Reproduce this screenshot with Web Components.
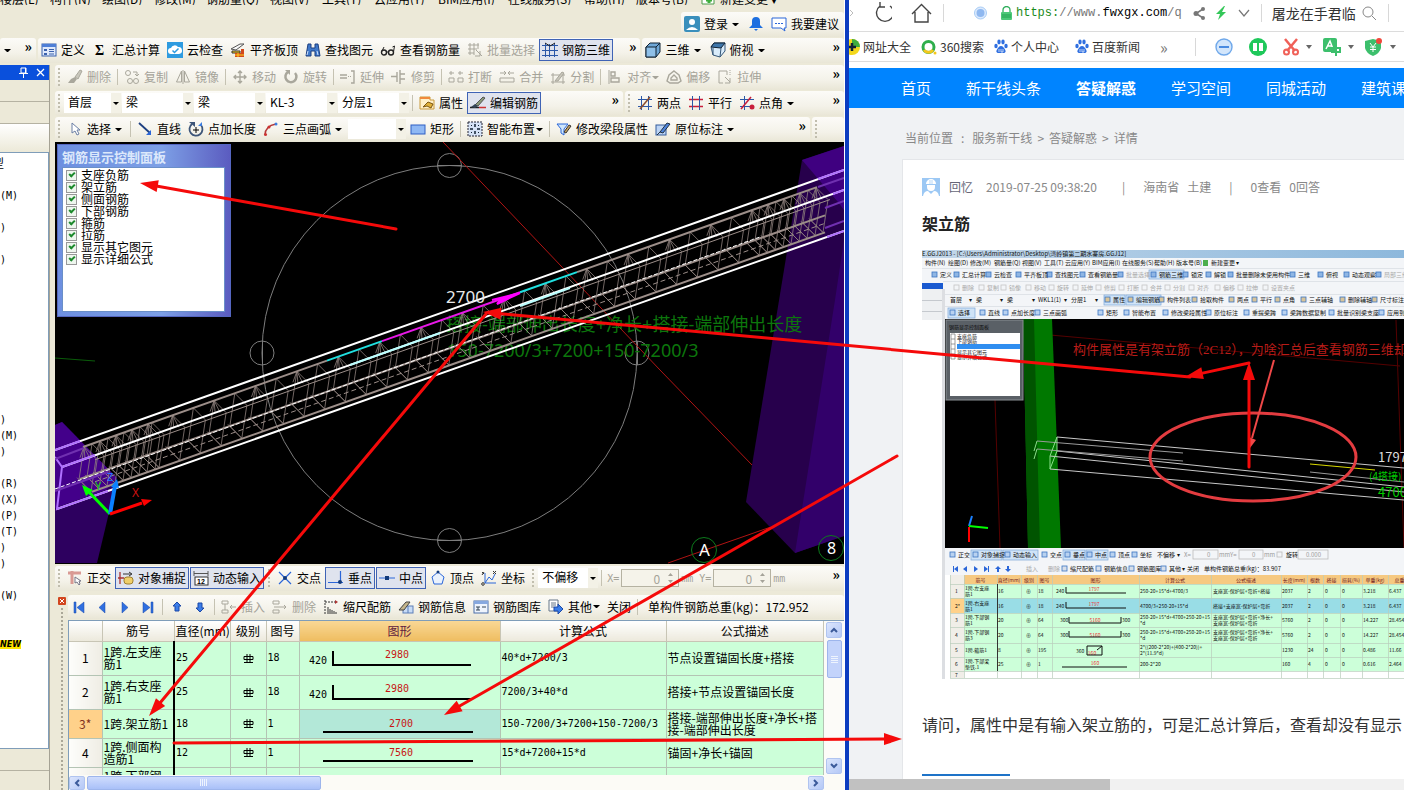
<!DOCTYPE html>
<html lang="zh-CN">
<head>
<meta charset="UTF-8">
<title>架立筋 - 答疑解惑</title>
<style>
  html, body { height: 100%; }
  body {
    margin: 0;
    display: grid;
    grid-template-columns: 849fr 555fr;
    overflow: hidden;
    font-family: "Noto Sans CJK SC", sans-serif;
    font-size: 12px;
    line-height: 16px;
    color: #000;
  }
</style>
</head>
<body>
<cad-app></cad-app>
<browser-app></browser-app>
<mark-layer></mark-layer>

<script>
const G = '#a9a79c';
const B = '#2b57a8';

// 16x16 图标
const ICONS = {
  define: `<rect x="1" y="2" width="14" height="12" fill="#dfe9fb" stroke="#3b62ad"/><rect x="1" y="2" width="14" height="3" fill="#4f7fd6"/><path d="M3 7h3v2h-3zM3 11h3v2h-3z" fill="#3b62ad"/><path d="M8 7.500h5M8 9.500h5M8 12h5" stroke="#3b62ad"/>`,
  sigma: `<text x="3" y="13" font-size="14" font-weight="bold" font-family="Liberation Serif, serif">Σ</text>`,
  cloud: `<rect width="16" height="16" fill="#2e9be0"/><path d="M4 12a3 3 0 0 1 0-6a4 4 0 0 1 7-1a3.500 3.500 0 0 1 1 7z" fill="#fff"/><path d="M5.500 8.500l2 2l4-4" stroke="#2e9be0" fill="none" stroke-width="1.500"/>`,
  slab: `<path d="M1 7l9-5l4 0l-8 6z" fill="#f7f7f7" stroke="#555"/><path d="M2 9h8v2h-8z" fill="#ffd21f" stroke="#333"/><path d="M5 11h8v4h-8z" fill="#d2481c"/><path d="M11 7h3v8h-3z" fill="#d2481c"/><path d="M5 13h9M8 11v4" stroke="#ffd21f"/>`,
  binoc: `<path d="M3 2h3v4h4v-4h3l2 12h-5v-5h-4v5h-5z" fill="#3f78c9" stroke="#1d3f80"/><path d="M3 9l-1 4M12 9l1 4" stroke="#cfe2ff"/>`,
  glass: `<circle cx="4" cy="10.500" r="2.500" fill="none" stroke="#222" stroke-width="1.400"/><circle cx="11" cy="10.500" r="2.500" fill="none" stroke="#222" stroke-width="1.400"/><path d="M6 10h3M13.500 10l1-6l-2 1M2 9l2-4" stroke="#222" fill="none"/>`,
  batch: `<path d="M1 3h11M1 7h9M1 11h6M3 1v12M7 1v12M11 1v6" stroke="${G}"/><path d="M9 8l6 6M13 9v5h-5" stroke="${G}" fill="none"/>`,
  bars: `<path d="M0 3.500h16M0 8.500h16M0 13.500h16M3.500 1v14M7.500 2v13M12.500 1v14" stroke="${B}"/><path d="M3 1l5 3l5-3" stroke="#222" fill="none"/>`,
  cube: `<path d="M1 5l4-4h10v9l-4 5h-10z" fill="#6fa7d6" stroke="#123"/><path d="M1 5h10v10h-10z" fill="#8fc0e8" stroke="#123"/><path d="M11 5l4-4" stroke="#123"/>`,
  cubeTop: `<path d="M1 5l3-4h11v8l-5 6l-7-2z" fill="#d9ecfb" stroke="#357"/><path d="M1 5l3-4h11l-4 5z" fill="#3f77ab" stroke="#123"/><path d="M11 6l-1 9M3 6v7" stroke="#357"/>`,
  brush: `<path d="M8 8l5-7l2 1l-4 8z" fill="#c9c7bc" stroke="${G}"/><path d="M1 14h6l3-4l-2-2l-4 2z" fill="${G}"/>`,
  copy: `<circle cx="4" cy="4" r="2.500" fill="none" stroke="${G}"/><circle cx="6" cy="12" r="2.500" fill="none" stroke="${G}"/><circle cx="12" cy="12" r="2.500" fill="none" stroke="${G}"/><path d="M9 3h4v3M11 5l2 2l2-2" stroke="${G}" fill="none"/>`,
  mirror: `<path d="M6.500 2v11h-5zM9.500 2v11h5z" fill="none" stroke="${G}"/><path d="M8 1v14" stroke="${G}"/>`,
  move: `<path d="M8 2v12M2 8h12M6 4l2-2l2 2M6 12l2 2l2-2M4 6l-2 2l2 2M12 6l2 2l-2 2" stroke="${G}" fill="none" stroke-width="1.400"/>`,
  rotate: `<path d="M5 3a5.500 5.500 0 1 0 7 1" stroke="${G}" fill="none" stroke-width="2.500"/><path d="M2 1h5v5z" fill="${G}"/>`,
  extend: `<path d="M0 6h7M0 9h7" stroke="${G}" stroke-width="1.400"/><path d="M8 7.500h4" stroke="${G}" stroke-dasharray="1 1"/><path d="M11 2h3v12h-3" stroke="${G}" fill="none" stroke-width="1.400"/>`,
  trim: `<path d="M0 7.500h6M6 3v10M9 1v14M9 5h5M9 10h5" stroke="${G}" fill="none" stroke-width="1.400"/>`,
  brk: `<path d="M1 4h5M10 4h5M3 2v4M12 2v4M1 9h5v4h-5zM10 9h5v4h-5z" stroke="${G}" fill="none"/>`,
  merge: `<path d="M1 4h5M10 4h5M5 2l2 2l-2 2M11 2l-2 2l2 2M1 9h14v4h-14z" stroke="${G}" fill="none"/>`,
  split: `<path d="M1 6h14M1 13h14M3 4v11M13 4v11" stroke="${G}"/><path d="M5 12l7-9l2 1l-6 8z" fill="#c9c7bc" stroke="${G}"/>`,
  align: `<path d="M2 1v14" stroke="${G}"/><path d="M4 3h4v4h-4zM4 9h8v4h-8z" fill="none" stroke="${G}" stroke-width="1.400"/>`,
  offset: `<path d="M8 2l5 4l2 6l-3 2h-8l-3-2l2-6z" fill="none" stroke="${G}" stroke-width="1.400"/><path d="M8 6l3 3v2h-6v-2z" fill="none" stroke="${G}" stroke-width="1.400"/>`,
  stretch: `<path d="M2 2h8v4M2 2v12h4" fill="none" stroke="${G}"/><path d="M8 8l5 5M13 9v5h-5" fill="none" stroke="${G}"/><path d="M13 1v5" stroke="${G}" stroke-dasharray="1 1"/>`,
  prop: `<path d="M1 2h10v3h4v9h-14z" fill="#fff0c8" stroke="#c99a3c"/><path d="M1 2h10v2h-10z" fill="#f08a3c"/><path d="M4 12l5-5l5 2l-2 4l-4-2z" fill="#e0b13a" stroke="#7a5510"/>`,
  edit: `<path d="M0 12.500h9" stroke="#222" stroke-width="1.500"/><path d="M5 10l8-8l2 1l-7 8z" fill="#8a9a78" stroke="#555"/><path d="M1 12l4-3l3 2l-3 2z" fill="#345"/><path d="M9 12.500h7" stroke="#c33" stroke-width="1.500"/>`,
  two: `<path d="M1 4.500h14M1 11.500h14" stroke="#2b57a8"/><path d="M4.500 1v14M11.500 1v14" stroke="#2b57a8"/><path d="M3 14l10-12" stroke="#8a4b2c" stroke-width="1.500"/>`,
  par: `<path d="M1 4.500h14M1 11.500h14" stroke="#c81e3c" stroke-width="1.500"/><path d="M4.500 1v14M11.500 1v14" stroke="#2b57a8"/>`,
  ang: `<path d="M1 4.500h14M1 11.500h14M5.500 1v14" stroke="#2b57a8"/><path d="M2 14l10-12" stroke="#c81e3c" stroke-width="1.500"/><circle cx="13" cy="12" r="2.500" fill="#c81e3c"/>`,
  cursor: `<path d="M5 2v10l3-2l2 4l2-1l-2-4h3z" fill="#fff" stroke="#6b7fa5"/>`,
  line: `<path d="M2 2l11 10" stroke="#1d3f80" stroke-width="1.800"/><path d="M14 14v-5l-5 5z" fill="#2b66d8"/>`,
  addLen: `<path d="M4 3a6.500 6.500 0 1 0 9 1" stroke="#3d5578" fill="none" stroke-width="1.800"/><path d="M1 1h6v5z" fill="#3d5578"/><path d="M8 6v6M5 9h6" stroke="#000"/><path d="M14 1v4h-4z" fill="#3b7de0"/>`,
  arc: `<path d="M2 14q0-9 11-11" stroke="#b53a3a" fill="none" stroke-width="1.500"/><circle cx="2.500" cy="13.500" r="1.500" fill="#c33"/><circle cx="6" cy="6" r="1.500" fill="#c33"/><circle cx="13" cy="3" r="1.500" fill="#3b7de0"/>`,
  rect: `<rect x="1" y="4" width="14" height="9" fill="#8fb8f4" stroke="#2f5fc4"/>`,
  smart: `<rect x="1" y="1" width="14" height="14" fill="#d5e2f6" stroke="#223" stroke-dasharray="2 1"/><path d="M8 3v3M8 10v3M3 8h3M10 8h3" stroke="#123" stroke-width="1.500"/><path d="M4 4h1v1h-1zM11 4h1v1h-1zM4 11h1v1h-1zM11 11h1v1h-1z" fill="#123"/>`,
  funnel: `<path d="M1 3h11l-4 5v6l-3-2v-4z" fill="#cfe6fb" stroke="#2b66d8"/><path d="M8 11l5-7l2 1l-5 7z" fill="#c9a25e" stroke="#333"/>`,
  note: `<rect x="1" y="4" width="10" height="10" fill="#bcd4f5" stroke="#345c9c"/><path d="M5 11l7-9l3 1l-7 9z" fill="#4d82d8" stroke="#234"/><path d="M2 14l4-4" stroke="#234"/>`,
  ortho: `<path d="M1 3h13M5 1v13" stroke="#d99a94" stroke-width="3"/><path d="M8 7v6l2-1l2 3l1-1l-1-3h2z" fill="#fff" stroke="#778"/>`,
  snap: `<path d="M2 2v12M0 8h6" stroke="#a33" stroke-width="1.300"/><rect x="6" y="7" width="9" height="7" rx="3" fill="#f0cf6a" stroke="#a08030"/><path d="M5 4h8M11 2l3 2l-3 2" stroke="#333" fill="none"/>`,
  dyn: `<path d="M1 1v5M15 1v5M1 3.500h14" stroke="#555"/><rect x="2" y="7" width="13" height="8" fill="#fff" stroke="#333"/><text x="4" y="14" font-size="7" font-weight="bold" font-family="Liberation Sans, sans-serif">12</text>`,
  cross: `<path d="M2 2l12 12M14 2l-12 12" stroke="#2b66d8" stroke-width="1.200"/><circle cx="8" cy="8" r="2" fill="#123a7a"/>`,
  perp: `<path d="M0 12.500h15M12.500 1v12" stroke="#2b66d8" stroke-width="1.200"/><circle cx="12" cy="12" r="2" fill="#123a7a"/>`,
  mid: `<path d="M0 8h16" stroke="#2b66d8"/><rect x="6" y="6" width="4" height="4" fill="#123a7a"/>`,
  penta: `<path d="M8 2l6 5l-2 7h-8l-2-7z" fill="#eaf2fd" stroke="#2b66d8"/><circle cx="8" cy="2" r="1.500" fill="#123a7a"/>`,
  coord: `<path d="M4 3v10h11M4 13l4-6l3 3l3-6" stroke="#2b66d8" fill="none"/><path d="M1 2l2 2M3 2l-2 3M12 1l3 3M15 1l-3 3" stroke="#333"/><circle cx="2" cy="14" r="1.300" fill="none" stroke="#333"/>`,
  first: `<path d="M3 3h2v11h-2zM13 3v11l-7-5.500z" fill="#2f6fe0" stroke="#1b49a8" stroke-width=".5"/>`,
  prev: `<path d="M11 3v11l-6-5.500z" fill="#2f6fe0" stroke="#1b49a8" stroke-width=".5"/>`,
  next: `<path d="M5 3v11l6-5.500z" fill="#2f6fe0" stroke="#1b49a8" stroke-width=".5"/>`,
  last: `<path d="M11 3h2v11h-2zM3 3v11l7-5.500z" fill="#2f6fe0" stroke="#1b49a8" stroke-width=".5"/>`,
  up: `<path d="M8 3l4 4h-2v5h-4v-5h-2z" fill="#3b7de8" stroke="#1b49a8"/>`,
  down: `<path d="M8 13l4-4h-2v-5h-4v5h-2z" fill="#3b7de8" stroke="#1b49a8"/>`,
  ins: `<path d="M1 2h6v3h-6zM1 11h6v3h-6zM4 5v6M9 8h6M11 6l-2 2l2 2" fill="none" stroke="${G}"/>`,
  del: `<path d="M1 2h6v3h-6zM1 11h6v3h-6zM2 8h12M12 6l2 2l-2 2" fill="none" stroke="${G}"/>`,
  scale: `<path d="M2 1v14M2 3h11" stroke="#333" stroke-dasharray="2 1"/><path d="M5 8v7M7 10v5M9 11v4M11 12v3M13 13v2" stroke="#333"/><path d="M12 1l3 2l-3 2" fill="#a33"/>`,
  info: `<rect x="5" y="7" width="10" height="7" fill="#c8dcf6" stroke="#5c7fb8"/><path d="M1 11l7-8l4 0l-6 8z" fill="#c4b58a" stroke="#444"/><path d="M10 7v7" stroke="#5c7fb8"/>`,
  lib: `<rect x="1" y="2" width="14" height="12" fill="#eef4fd" stroke="#4a6ea8"/><rect x="1" y="2" width="14" height="3" fill="#86a8df"/><path d="M3 8h4M3 11h4M9 8h4M5 8v3" stroke="#345" fill="none"/>`,
  other: `<path d="M1 1h9v11h-9z" fill="#fff" stroke="#678"/><path d="M3 4h5M3 6h5M3 8h3" stroke="#678"/><path d="M6 8h4v-3l5 5l-5 5v-3h-4z" fill="#3b7de8" stroke="#1b49a8"/>`,
  user: `<rect width="16" height="16" rx="2" fill="#3a8fbc"/><circle cx="8" cy="6" r="3" fill="#fff"/><path d="M2 14q6-6 12 0z" fill="#fff"/>`,
  bell: `<path d="M8 1a4 4 0 0 1 4 4v4l3 3h-14l3-3v-4a4 4 0 0 1 4-4z" fill="#1d6fe0"/><path d="M6 13h4l-2 2z" fill="#1d6fe0"/>`,
  chat: `<path d="M1 2h14v10h-2l1 3l-4-3h-9z" fill="#fff" stroke="#2b66d8"/><path d="M4 7.500h2M7 7.500h2M10 7.500h2" stroke="#2b66d8"/>`,
  fresh: `<path d="M2 1h9l3 3v11h-12z" fill="#fff" stroke="#4c9c4c"/><path d="M9 8v6M6 11h6" stroke="#3cae3c" stroke-width="3"/>`,
};
const icon = (name, size = 16) =>
  `<svg class="ico" width="${size}" height="${size}" viewBox="0 0 16 16" aria-hidden="true">${ICONS[name] || ''}</svg>`;

class BaseEl extends HTMLElement {
  constructor() {
    super();
    this.attachShadow({ mode: 'open' });
  }
  connectedCallback() {
    this.shadowRoot.innerHTML = this.template();
  }
}

/* ---------- 工具栏零件 ---------- */

class ToolBtn extends BaseEl {
  template() {
    const ic = this.getAttribute('icon');
    const off = this.hasAttribute('off');
    return `
      <style>
        :host { display: flex; flex: none; }
        button {
          display: flex; align-items: center; justify-content: center;
          height: 22px; padding: 0 3px; border: 0; background: none;
          font: inherit; white-space: nowrap; color: ${off ? '#a5a399' : '#000'};
        }
        :host([boxed]) button { background: #dfe3ee; box-shadow: inset 0 0 0 1px #3f63b5; }
        :host([nav]) button { width: 22px; }
        .ico { flex: none; }
        .ico + .t { margin-left: 4px; }
        i { margin-left: 1px; border: 3px solid transparent; border-top-color: currentColor; border-bottom: 0; width: 1px; }
        :host([split]) i { margin-left: 4px; margin-right: 2px; }
      </style>
      <button type="button" ${off ? 'disabled' : ''} aria-label="${this.textContent || this.getAttribute('tip') || ''}">
        ${ic ? icon(ic) : ''}${this.textContent ? '<span class="t"><slot></slot></span>' : ''}
        ${this.hasAttribute('caret') || this.hasAttribute('split') ? '<i></i>' : ''}
      </button>`;
  }
}

class ToolSep extends BaseEl {
  template() {
    return `<style>:host { display: block; flex: none; width: 1px; height: 16px; margin: 0 2px; background: #c5c2b2; }</style>`;
  }
}

class ToolGrip extends BaseEl {
  template() {
    return `<style>:host { display: block; flex: none; width: 2px; height: 18px; margin: 0 3px;
      background: repeating-linear-gradient(#c1beae 0 2px, transparent 2px 4px); }</style>`;
  }
}

class ToolCombo extends BaseEl {
  template() {
    return `
      <style>
        :host { display: flex; flex: none; position: relative; }
        select {
          appearance: none; width: ${this.getAttribute('w')}px; height: 20px; margin: 0; padding: 0 12px 2px 4px;
          border: 0; border-radius: 0; font: inherit; color: #000;
          background: linear-gradient(90deg, #fff calc(100% - 10px), #f3f1e6 0);
        }
        i { position: absolute; right: 2px; top: 9px; border: 3px solid transparent; border-top-color: #000; border-bottom: 0; }
      </style>
      <select aria-label="${this.getAttribute('tip')}"><option>${this.getAttribute('value')}</option></select><i></i>`;
  }
}

class ToolBar extends BaseEl {
  template() {
    return `
      <style>
        :host {
          display: flex; align-items: center; gap: 1px; height: 25px; min-width: 0; box-sizing: border-box;
          padding: 0 0 1px; border-radius: 3px; overflow: hidden;
          background: linear-gradient(#fcfbf8, #f4f2e9 60%, #e9e6d6);
        }
        .more { margin-left: auto; padding: 0 4px 8px; font-size: 14px; line-height: 12px; font-weight: bold; color: #000; }
      </style>
      <slot></slot>${this.hasAttribute('more') ? '<span class="more">»</span>' : ''}`;
  }
}

/* ---------- 三维视图 ---------- */

class ModelView extends BaseEl {
  // 顶部纵筋在 x 处的高度
  railY(x) { return 447 - (x - 83) * 0.354; }

  rail(x1, x2, off, attrs) {
    return `<line x1="${x1}" y1="${this.railY(x1) + off}" x2="${x2}" y2="${this.railY(x2) + off}" ${attrs}/>`;
  }

  stirrups() {
    const xs = [];
    for (let x = 84; x < 150; x += 8) xs.push(x);
    for (let x = 152; x < 750; x += 20.7) xs.push(x);
    for (let x = 752; x < 820; x += 8) xs.push(x);
    return xs.map((x, i) => {
      const y = this.railY(x);
      const hook = i % 2 ? '' : `M${x} ${y}l-4 11M${x} ${y}l1 12M${x} ${y}l6 12`;
      return `<path d="M${x} ${y}l12 12l-5 33l-12 -12zM${x + 7} ${y + 45}l-14 -14${hook}"/>`;
    }).join('');
  }

  template() {
    return `
      <style>
        :host { display: block; position: relative; overflow: hidden; background: #000; }
        svg { display: block; width: 100%; height: 100%; }
        rebar-panel { position: absolute; left: 2px; top: 2px; }
        text { font-family: "Noto Sans", "Noto Sans CJK SC", sans-serif; }
      </style>
      <svg viewBox="55 142 789 422" preserveAspectRatio="xMidYMid slice">
        <g fill="none" stroke="#7d7d7d">
          <circle cx="449.500" cy="353" r="187.500"/>
          <circle cx="449.500" cy="165.500" r="12"/><circle cx="262" cy="353" r="12"/>
          <circle cx="637" cy="353" r="12"/><circle cx="449.500" cy="540.500" r="12"/>
          <path d="M437 165.500h25M437 540.500h25M262.500 341v24M637.500 341v24"/>
        </g>
        <path d="M443 142L660 370L752 465M668 563L768 528L812 512" stroke="#b01414" fill="none"/>
        <path d="M55 358L95 361" stroke="#0a5c0a"/>

        <path d="M802 160L844 146V536L795 553L746 502z" fill="#27004c"/>
        <path d="M835 300L844 240V536L795 553z" fill="#32006a"/>
        <path d="M802 160L844 146V210L838 202z" fill="#3f0080"/>
        <path d="M55 425L62 422L117 478L112 500L97 563H55z" fill="#2d005f"/>
        <path d="M55 425L62 422L117 478L106 490L55 508z" fill="#43008a"/>
        <text x="446" y="331" font-size="18" fill="#0c760c">搭接-端部伸出长度+净长+搭接-端部伸出长度</text>
        <text x="447" y="357" font-size="18" fill="#0c760c">150-7200/3+7200+150-7200/3</text>

        <g fill="none" stroke="#8f827d" stroke-width=".8">${this.stirrups()}</g>
        ${this.rail(83, 327, 0, 'stroke="#9c8e89" stroke-width="2"')}
        ${this.rail(327, 382, 0, 'stroke="#20e0e0" stroke-width="2"')}
        ${this.rail(382, 520, 0, 'stroke="#e818e8" stroke-width="2"')}
        ${this.rail(520, 577, 0, 'stroke="#20e0e0" stroke-width="2"')}
        ${this.rail(577, 817, 0, 'stroke="#9c8e89" stroke-width="2"')}
        ${this.rail(95, 830, 17, 'stroke="#9c8e89"')}
        ${this.rail(80, 825, 31, 'stroke="#9c8e89" stroke-width="2"')}
        ${this.rail(95, 825, 39, 'stroke="#9c8e89" stroke-dasharray="5 3"')}
        ${this.rail(92, 825, 48, 'stroke="#9c8e89" stroke-width="2"')}
        <g fill="none" stroke="#fff" stroke-width="2">
          <path d="M55 450L844 170M62 467L844 190M57 509L844 231"/>
          <path d="M55 489L760 237" stroke-width="1" stroke-dasharray="4 2"/>
        </g>
        <path d="M350 365L440 333M520 306L570 288" stroke="#bff" stroke-width="2"/>
        <g fill="none" stroke="#b070ff" stroke-width="2">
          <path d="M55 450L80 441M55 457L62 467L57 509L108 491M62 467L95 455"/>
          <path d="M818 179L844 170M833 194L844 190M827 237L844 231"/>
          <path d="M818 187L844 178M825 208L844 201M825 228L844 221M55 491L108 472M55 459L84 448" stroke="#7030b0"/>
        </g>
        <path d="M492 300L520 293L497 304L502 298z" fill="#f0f" stroke="#f0f" stroke-width="2"/>
        <text x="446" y="303" font-size="17" fill="#e8e8e8">2700</text>

        <path d="M110 514L88 491" stroke="#0f0" stroke-width="3"/><path d="M82 485l4 11l7-6z" fill="#0f0"/>
        <path d="M110 514L115 486" stroke="#0a80ff" stroke-width="4"/><path d="M117 479l-6 8l8 1z" fill="#0a80ff"/>
        <path d="M110 514L142 503" stroke="#f00" stroke-width="3"/><path d="M152 500l-11-1l3 7z" fill="#f00"/>
        <text x="132" y="497" font-size="12" fill="#c11">X</text>
        <text x="95" y="490" font-size="11" fill="#1c1">Y</text>
        <text x="107" y="481" font-size="11" fill="#27f">Z</text>

        <g fill="none" stroke="#0c7a1c"><circle cx="704" cy="550" r="12.500"/><circle cx="831" cy="548" r="12.500"/></g>
        <text x="699" y="556" font-size="17" fill="#fff">A</text>
        <text x="827" y="554" font-size="16" fill="#fff">8</text>
      </svg>
      <rebar-panel></rebar-panel>`;
  }
}

class RebarPanel extends BaseEl {
  template() {
    const items = ['支座负筋', '架立筋', '侧面钢筋', '下部钢筋', '箍筋', '拉筋', '显示其它图元', '显示详细公式'];
    return `
      <style>
        :host {
          display: block; width: 174px; height: 173px; box-sizing: border-box; padding: 4px 5px 5px 4px;
          background: linear-gradient(90deg, #6d8fe0, #7da0e6 60%, #5b5cc0);
          border: 1px solid #5566c0;
        }
        h2 { margin: 0; height: 18px; font-size: 13px; line-height: 15px; color: #dce8fb; }
        div { height: 145px; box-sizing: border-box; padding: 1px 3px; background: #fff; border: 1px solid #6a8fc8; }
        label { display: flex; align-items: center; gap: 4px; height: 12px; line-height: 12px; }
        input {
          appearance: none; width: 11px; height: 11px; margin: 0; box-sizing: border-box; border: 1px solid #999;
          background: #eef6ee; display: grid; place-items: center;
        }
        input:checked::before {
          content: ""; width: 4px; height: 2px; border: solid #1d8a2d; border-width: 0 0 2px 2px;
          transform: rotate(-45deg); margin-bottom: 2px;
        }
      </style>
      <h2>钢筋显示控制面板</h2>
      <div>${items.map(t => `<label><input type="checkbox" checked>${t}</label>`).join('')}</div>`;
  }
}

/* ---------- 钢筋明细表 ---------- */

class RebarTable extends BaseEl {
  shape(r) {
    const h = r.hook;
    return `<svg width="200" height="26" viewBox="0 0 200 26">
      ${h ? `<text x="9" y="19">${h}</text>` : ''}
      <path d="${h ? 'M33 6V20H171' : 'M23 21H173'}" fill="none" stroke="#000" stroke-width="2"/>
      <text x="${h ? 97 : 101}" y="${h ? 13 : 16}" text-anchor="middle" fill="#c81414">${r.len}</text>
    </svg>`;
  }

  template() {
    const rows = [
      { n: '1', name: '1跨.左支座筋1', d: 25, no: 18, hook: 420, len: 2980, f: '40*d+7200/3', desc: '节点设置锚固长度+搭接', h: 34 },
      { n: '2', name: '1跨.右支座筋1', d: 25, no: 18, hook: 420, len: 2980, f: '7200/3+40*d', desc: '搭接+节点设置锚固长度', h: 34 },
      { n: '3*', name: '1跨.架立筋1', d: 18, no: 1, len: 2700, f: '150-7200/3+7200+150-7200/3', desc: '搭接-端部伸出长度+净长+搭接-端部伸出长度', h: 29, cur: true },
      { n: '4', name: '1跨.侧面构造筋1', d: 12, no: 1, len: 7560, f: '15*d+7200+15*d', desc: '锚固+净长+锚固', h: 29 },
    ];
    const grade = `<svg width="11" height="11" viewBox="0 0 11 11"><path d="M1 3.500h9v3h-9zM4 1v9M7 1v9M1 9.500h9" fill="none" stroke="#000"/></svg>`;
    return `
      <style>
        :host { display: grid; grid-template: minmax(0, 1fr) 15px / minmax(0, 1fr) 20px; background: #fff; border-top: 1px solid #7f9db9; border-left: 1px solid #7f9db9; }
        .clip { overflow: hidden; }
        table { width: 100%; border-collapse: collapse; table-layout: fixed; line-height: 12px; }
        th, td { box-sizing: border-box; padding: 0 1px; border: 1px solid #b4c4b4; border-width: 0 1px 1px 0; overflow: hidden; }
        td { background: #ccffd9; text-align: left; word-break: break-all; }
        thead th { height: 20px; font-weight: normal; white-space: nowrap; background: linear-gradient(#fff, #ece9dc); border-color: #c8c5b5; }
        thead th.hot { background: linear-gradient(#f9d795, #efbd60); color: #602040; }
        tbody th { font-weight: normal; background: linear-gradient(90deg, #fdfdfb, #efede4); }
        tbody tr.cur th { background: #ffd18a; color: #803020; }
        td:nth-child(2) { border-right: 2px solid #000; }
        td.g { text-align: center; }
        td.s { padding: 0; }
        td.f, td.n { font: 10px/12px "DejaVu Sans Mono", monospace; white-space: nowrap; }
        tr.cur td.s { background: #b3e8d8; }
        svg { display: block; margin: 0 auto; }
        td.s svg { margin: 0; }
        svg text { font: 10px "DejaVu Sans Mono", monospace; }
        .v { display: flex; flex-direction: column; align-items: center; gap: 2px; padding-top: 1px; background: #fcfbf8; }
        .h { grid-column: 1 / -1; display: flex; align-items: center; gap: 2px; padding: 0 20px 0 0; background: #fcfbf6; }
        .b { box-sizing: border-box; width: 16px; height: 16px; padding: 0; border: 1px solid #b0c4f0; border-radius: 2px; background: linear-gradient(135deg, #dbe5fd, #b4c8f6); display: grid; place-items: center; flex: none; }
        .h .b { height: 14px; }
        .b:last-child { margin-left: auto; }
        .v .b:last-child { margin: auto 0 1px; }
        .tv { width: 15px; height: 38px; background: #c3d3fb; border: 1px solid #9db5ec; border-radius: 2px; box-sizing: border-box; display: grid; place-items: center; }
        .th { flex: 0 0 31%; height: 14px; background: linear-gradient(#cfdcfd, #a9c0f8); border: 1px solid #9db5ec; border-radius: 2px; box-sizing: border-box; display: grid; place-items: center; }
      </style>
      <div class="clip">
      <table>
        <colgroup><col style="width:33px"><col style="width:72px"><col style="width:56px"><col style="width:36px"><col style="width:33px"><col style="width:201px"><col style="width:166px"><col></colgroup>
        <thead><tr><th></th><th>筋号</th><th>直径(mm)</th><th>级别</th><th>图号</th><th class="hot">图形</th><th>计算公式</th><th>公式描述</th></tr></thead>
        <tbody>
        ${rows.map(r => `<tr class="${r.cur ? 'cur' : ''}" style="height:${r.h}px"><th>${r.n}</th><td>${r.name}</td><td class="n">${r.d}</td><td class="g">${grade}</td><td class="n">${r.no}</td><td class="s">${this.shape(r)}</td><td class="f">${r.f}</td><td>${r.desc}</td></tr>`).join('')}
        <tr style="height:29px"><th></th><td>1跨.下部钢筋1</td><td></td><td></td><td></td><td></td><td></td><td></td></tr>
        </tbody>
      </table>
      </div>
      <div class="v">
        <button class="b" aria-label="上"><svg width="8" height="6"><path d="M1 5l3-3l3 3" fill="none" stroke="#3b5a9a" stroke-width="2"/></svg></button>
        <div class="tv"><svg width="7" height="8"><path d="M0 1.500h7M0 3.500h7M0 5.500h7M0 7.500h7" stroke="#eef4fe"/></svg></div>
        <button class="b" aria-label="下"><svg width="8" height="6"><path d="M1 1l3 3l3-3" fill="none" stroke="#3b5a9a" stroke-width="2"/></svg></button>
      </div>
      <div class="h">
        <button class="b" aria-label="左"><svg width="6" height="8"><path d="M5 1l-3 3l3 3" fill="none" stroke="#3b5a9a" stroke-width="2"/></svg></button>
        <div class="th"><svg width="8" height="7"><path d="M.5 0v7M2.500 0v7M4.500 0v7M6.500 0v7" stroke="#eef4fe"/></svg></div>
        <button class="b" aria-label="右"><svg width="6" height="8"><path d="M1 1l3 3l-3 3" fill="none" stroke="#3b5a9a" stroke-width="2"/></svg></button>
      </div>`;
  }
}

/* ---------- 左侧构件树 ---------- */

class SidePane extends BaseEl {
  template() {
    const rows = { 0: '型', 2: '(M)', 4: ')', 6: ')', 16: ')', 17: '(M)', 18: ')', 20: '(R)', 21: '(X)', 22: '(P)', 23: '(T)', 24: ')', 25: ')', 27: '(W)' };
    let list = '';
    for (let i = 0; i < 30; i++) list += `<li>${rows[i] || ''}</li>`;
    return `
      <style>
        :host { display: flex; flex-direction: column; box-sizing: border-box; border-right: 1px solid #a5a294; background: #ece9d8; overflow: hidden; }
        header { display: flex; justify-content: flex-end; align-items: center; gap: 8px; height: 15px; padding-right: 4px; background: #0a50dc; }
        .bar { height: 21px; border-bottom: 1px solid #b5b2a2; }
        .tab { height: 28px; background: linear-gradient(#fff, #ece9d8); }
        ul { flex: 1; margin: 0; padding: 3px 0 0; list-style: none; background: #fff; border: 1px solid #7f9db9; border-left: 0; overflow: hidden; }
        li { height: 16px; font: 10px/16px "DejaVu Sans Mono", "Noto Sans CJK SC", monospace; }
        li:first-child { width: 4px; overflow: hidden; direction: rtl; font-size: 12px; white-space: nowrap; }
        b { background: #ffe600; font: italic bold 8px/10px "DejaVu Sans", sans-serif; }
        .foot { height: 21px; border-bottom: 1px solid #b5b2a2; }
        .end { height: 19px; }
      </style>
      <header>
        <svg width="9" height="11"><path d="M2 1h5v5h-5zM0 6.500h9M4.500 6v5M6.500 1v5" fill="none" stroke="#fff"/></svg>
        <svg width="9" height="9"><path d="M1 1l7 7M8 1l-7 7" stroke="#fff" stroke-width="1.300"/></svg>
      </header>
      <div class="bar"></div><div class="bar"></div><div class="tab"></div>
      <ul>${list}<li><b>NEW</b></li></ul>
      <div class="foot"></div><div class="end"></div>`;
  }
}

class CadApp extends BaseEl {
  template() {
    const menu = ['楼层(L)', '构件(N)', '绘图(D)', '修改(M)', '钢筋量(Q)', '视图(V)', '工具(T)', '云应用(Y)', 'BIM应用(I)', '在线服务(S)', '帮助(H)', '版本号(B)'];
    const menuW = t => [...t].reduce((w, c) => w + (c.charCodeAt(0) > 255 ? 12 : 6), 0) - (t[0] === '楼' ? 2 : 0);
    return `
      <style>
        :host {
          display: flex; flex-direction: column; min-width: 0; min-height: 0; box-sizing: border-box; height: 100vh;
          background: #ece9d8; border-right: 4px solid #0c3cc0; box-shadow: inset -1px 0 #fff; padding-right: 1px; overflow: hidden;
        }
        .menu { display: flex; align-items: flex-end; gap: 10px; height: 5px; margin-bottom: 7px; overflow: hidden; line-height: 12px; white-space: nowrap; flex: none; }
        .menu svg { margin-right: -6px; flex: none; }
        .row { display: flex; gap: 2px; flex: none; }
        .login { justify-content: flex-end; margin-bottom: 1px; }
        .login tool-bar { flex: 0 0 auto; padding-right: 2px; }
        .body { flex: 1; display: grid; grid-template: minmax(0, 1fr) / 50px minmax(0, 1fr); gap: 5px; margin-top: 2px; min-height: 0; }
        main { display: flex; flex-direction: column; min-width: 0; min-height: 0; }
        .bars { display: flex; flex-direction: column; gap: 1px; flex: none; }
        model-view { flex: 1; min-height: 0; }
        .snap { margin: 2px 0 4px; flex: none; }
        .snap label { color: #a5a399; margin-left: 2px; font: 10px "DejaVu Sans Mono", monospace; }
        .snap input { width: 58px; height: 18px; box-sizing: border-box; padding: 0 18px 0 0; margin: 0 1px; border: 1px solid #b5b2a2; background: #f5f3ea; color: #a5a399; text-align: right; font: 12px "Noto Sans CJK SC", sans-serif; }
        .snap .u { color: #a5a399; margin-right: 3px; font: 10px "DejaVu Sans Mono", monospace; }
        .spin { flex: none; width: 7px; height: 12px; margin: 0 6px 0 -14px; }
        .grid { display: grid; grid-template: minmax(0, 1fr) / 13px minmax(0, 1fr); flex: none; height: 195px; }
        .dock { display: flex; flex-direction: column; align-items: center; gap: 3px; padding-top: 2px; }
        .dock button { width: 8px; height: 8px; padding: 0; border: 0; border-radius: 1px; background: #d2451e; display: grid; place-items: center; }
        .dock i { flex: 1; width: 2px; background: repeating-linear-gradient(#aaa798 0 2px, transparent 2px 4px); }
        .work { display: flex; flex-direction: column; min-width: 0; min-height: 0; }
        .work tool-bar { height: 24px; flex: none; margin-bottom: 1px; }
        rebar-table { flex: 1; min-height: 0; }
        .sum { margin-left: 7px; white-space: nowrap; }
      </style>
      <nav class="menu">
        ${menu.map(t => `<span style="min-width:${menuW(t)}px">${t}</span>`).join('')}
        ${icon('fresh')}<span>新建变更 ▾</span>
      </nav>
      <div class="row login">
        <tool-bar><tool-btn icon="user" split>登录</tool-btn><tool-btn icon="bell" nav tip="消息"></tool-btn><tool-btn icon="chat">我要建议</tool-btn></tool-bar>
      </div>
      <div class="row">
        <tool-bar more style="flex: 36 1 0"><tool-btn caret tip="更多"></tool-btn></tool-bar>
        <tool-bar more style="flex: 604 1 0">
          <tool-btn icon="define">定义</tool-btn><tool-btn icon="sigma">汇总计算</tool-btn><tool-btn icon="cloud">云检查</tool-btn>
          <tool-btn icon="slab">平齐板顶</tool-btn><tool-btn icon="binoc">查找图元</tool-btn><tool-btn icon="glass">查看钢筋量</tool-btn>
          <tool-btn icon="batch" off>批量选择</tool-btn><tool-btn icon="bars" boxed>钢筋三维</tool-btn>
        </tool-bar>
        <tool-bar more style="flex: 202 1 0"><tool-btn icon="cube" split>三维</tool-btn><tool-btn icon="cubeTop" split>俯视</tool-btn></tool-bar>
      </div>
      <div class="body">
        <side-pane></side-pane>
        <main>
          <div class="bars">
            <tool-bar more><tool-grip></tool-grip>
              <tool-btn icon="brush" off>删除</tool-btn><tool-sep></tool-sep>
              <tool-btn icon="copy" off>复制</tool-btn><tool-btn icon="mirror" off>镜像</tool-btn><tool-sep></tool-sep>
              <tool-btn icon="move" off>移动</tool-btn><tool-btn icon="rotate" off>旋转</tool-btn><tool-sep></tool-sep>
              <tool-btn icon="extend" off>延伸</tool-btn><tool-btn icon="trim" off>修剪</tool-btn><tool-sep></tool-sep>
              <tool-btn icon="brk" off>打断</tool-btn><tool-btn icon="merge" off>合并</tool-btn><tool-btn icon="split" off>分割</tool-btn><tool-sep></tool-sep>
              <tool-btn icon="align" off caret>对齐</tool-btn><tool-btn icon="offset" off>偏移</tool-btn><tool-btn icon="stretch" off>拉伸</tool-btn>
            </tool-bar>
            <div class="row">
              <tool-bar more style="flex: 568 1 0"><tool-grip></tool-grip>
                <tool-combo w="57" value="首层" tip="楼层"></tool-combo><tool-combo w="71" value="梁" tip="构件类别"></tool-combo>
                <tool-combo w="71" value="梁" tip="构件类型"></tool-combo><tool-combo w="71" value="KL-3" tip="构件"></tool-combo>
                <tool-combo w="71" value="分层1" tip="分层"></tool-combo><tool-sep></tool-sep>
                <tool-btn icon="prop">属性</tool-btn><tool-btn icon="edit" boxed>编辑钢筋</tool-btn>
              </tool-bar>
              <tool-bar more style="flex: 219 1 0"><tool-grip></tool-grip>
                <tool-btn icon="two">两点</tool-btn><tool-btn icon="par">平行</tool-btn><tool-btn icon="ang" split>点角</tool-btn>
              </tool-bar>
            </div>
            <div class="row">
              <tool-bar more style="flex: 755 1 0"><tool-grip></tool-grip>
                <tool-btn icon="cursor" split>选择</tool-btn><tool-sep></tool-sep>
                <tool-btn icon="line">直线</tool-btn><tool-btn icon="addLen">点加长度</tool-btn><tool-btn icon="arc" split>三点画弧</tool-btn>
                <tool-combo w="58" value="" tip="半径"></tool-combo>
                <tool-btn icon="rect">矩形</tool-btn><tool-sep></tool-sep>
                <tool-btn icon="smart" caret>智能布置</tool-btn><tool-sep></tool-sep>
                <tool-btn icon="funnel">修改梁段属性</tool-btn><tool-btn icon="note" split>原位标注</tool-btn>
              </tool-bar>
              <tool-bar style="flex: 32 1 0"><tool-grip></tool-grip></tool-bar>
            </div>
          </div>
          <model-view></model-view>
          <tool-bar class="snap" more><tool-grip></tool-grip>
            <tool-btn icon="ortho">正交</tool-btn><tool-btn icon="snap" boxed>对象捕捉</tool-btn><tool-btn icon="dyn" boxed>动态输入</tool-btn><tool-grip></tool-grip>
            <tool-btn icon="cross">交点</tool-btn><tool-btn icon="perp" boxed>垂点</tool-btn><tool-btn icon="mid" boxed>中点</tool-btn>
            <tool-btn icon="penta">顶点</tool-btn><tool-btn icon="coord">坐标</tool-btn><tool-grip></tool-grip>
            <tool-combo w="60" value="不偏移" tip="偏移方式"></tool-combo><tool-sep></tool-sep>
            <label for="ox">X=</label><input id="ox" value="0" disabled>${this.spin()}<span class="u">mm</span>
            <label for="oy">Y=</label><input id="oy" value="0" disabled>${this.spin()}<span class="u">mm</span>
          </tool-bar>
          <div class="grid">
            <div class="dock"><button aria-label="关闭面板"><svg width="6" height="6"><path d="M1 1l4 4M5 1l-4 4" stroke="#fff"/></svg></button><i></i></div>
            <div class="work">
              <tool-bar>
                <tool-btn icon="first" nav tip="首行"></tool-btn><tool-btn icon="prev" nav tip="上一行"></tool-btn><tool-btn icon="next" nav tip="下一行"></tool-btn><tool-btn icon="last" nav tip="末行"></tool-btn><tool-sep></tool-sep>
                <tool-btn icon="up" nav tip="上移"></tool-btn><tool-btn icon="down" nav tip="下移"></tool-btn><tool-sep></tool-sep>
                <tool-btn icon="ins" off>插入</tool-btn><tool-btn icon="del" off>删除</tool-btn><tool-btn icon="scale">缩尺配筋</tool-btn>
                <tool-btn icon="info">钢筋信息</tool-btn><tool-btn icon="lib">钢筋图库</tool-btn><tool-btn icon="other" caret>其他</tool-btn>
                <tool-btn>关闭</tool-btn><tool-sep></tool-sep><span class="sum">单构件钢筋总重(kg)：172.952</span>
              </tool-bar>
              <rebar-table></rebar-table>
            </div>
          </div>
        </main>
      </div>`;
  }

  spin() {
    return `<svg class="spin" viewBox="0 0 7 12"><path d="M1 4l2.500-3l2.500 3zM1 8l2.500 3l2.500-3z" fill="#a5a399"/></svg>`;
  }
}

/* ---------- 帖子里的截图 ---------- */

class PostShot extends BaseEl {
  texts(y, list, fill = '#111', size = 6) {
    return list.map(([x, t, f]) => `<text x="${x}" y="${y}" font-size="${size}" fill="${f || fill}">${t}</text>`).join('');
  }

  ticks(y, list, stroke, fill = 'none') {
    return list.map(([x]) => `<rect x="${x - 8}" y="${y - 5}" width="5" height="5" fill="${fill}" stroke="${stroke}" stroke-width=".8"/>`).join('');
  }

  table() {
    const cols = [950, 964, 997, 1021, 1037, 1052, 1139, 1211, 1281, 1307, 1323, 1340, 1362, 1388, 1420];
    const ys = [584, 598, 613, 627, 643, 657, 671];
    const rows = [
      ['1', '1跨.左支座|筋1', '16', '18', '250-20+15*d+4700/3', '支座宽-保护层+弯折+搭接', '2037', '2', '3.218', '6.437'],
      ['2*', '1跨.右支座|筋1', '16', '18', '4700/3+250-20+15*d', '搭接+支座宽-保护层+弯折', '2037', '2', '3.218', '6.437'],
      ['3', '1跨.下部钢|筋1', '20', '64', '250-20+15*d+4700+250-20+15|*d', '支座宽-保护层+弯折+净长+|支座宽-保护层+弯折', '5760', '2', '14.227', '28.454'],
      ['4', '1跨.下部钢|筋3', '20', '64', '250-20+15*d+4700+250-20+15|*d', '支座宽-保护层+弯折+净长+|支座宽-保护层+弯折', '5760', '2', '14.227', '28.454'],
      ['5', '1跨.箍筋1', '8', '195', '2*((200-2*20)+(400-2*20))+|2*(11.9*d)', '', '1230', '24', '0.486', '11.66'],
      ['6', '1跨.下部梁|垫铁.1', '25', '1', '200-2*20', '', '160', '4', '0.616', '2.464'],
    ];
    const cell = (x, y, t) => {
      const p = t.split('|');
      return p.map((s, i) => `<text x="${x}" y="${y + (p.length > 1 ? i * 6 - 3 : 0)}">${s}</text>`).join('');
    };
    const heads = ['', '筋号', '直径(mm)', '级别', '图号', '图形', '计算公式', '公式描述', '长度(mm)', '根数', '搭接', '损耗(%)', '单重(kg)', '总重(kg)'];
    let s = `<rect x="950" y="575" width="454" height="9" fill="#f6c981"/><rect x="950" y="584" width="454" height="87" fill="#ccffd9"/>
      <rect x="950" y="598" width="454" height="15" fill="#99dde6"/><rect x="950" y="575" width="14" height="103" fill="#f0eee8"/><rect x="950" y="598" width="14" height="15" fill="#ffd18a"/>`;
    s += `<path d="${ys.map(y => `M950 ${y}.500H1404`).join('')}${cols.map(x => `M${x}.500 575V678`).join('')}M950 678.500H1404" stroke="#b9cdbb" stroke-width=".7"/><path d="M997.500 584V671" stroke="#333"/>`;
    s += '<g font-size="5" fill="#702020" text-anchor="middle">' + heads.map((h, i) => `<text x="${(cols[i] + cols[i + 1]) / 2}" y="582">${h}</text>`).join('') + '</g>';
    s += '<g font-size="5" fill="#111">';
    rows.forEach((r, i) => {
      const y = (ys[i] + ys[i + 1]) / 2 + 2;
      s += cell(955, y, r[0]) + cell(965, y, r[1]) + cell(998, y, r[2]) + cell(1026, y, '⊕') + cell(1038, y, r[3]) + cell(1140, y, r[4]) + cell(1213, y, r[5])
        + cell(1282, y, r[6]) + cell(1308, y, r[7]) + cell(1325, y, '0') + cell(1342, y, '0') + cell(1363, y, r[8]) + cell(1389, y, r[9]);
    });
    s += cell(955, 677, '7');
    s += `<text x="1056" y="593">240</text><text x="1056" y="608">240</text><text x="1060" y="622">300</text><text x="1060" y="637">300</text>
      <text x="1122" y="622">300</text><text x="1122" y="637">300</text><text x="1076" y="653">360</text></g>`;
    s += `<g font-size="5" fill="#e33" text-anchor="middle"><text x="1094" y="591">1797</text><text x="1094" y="606">1797</text><text x="1095" y="622">5160</text><text x="1095" y="637">5160</text><text x="1092" y="655">160</text><text x="1095" y="665">160</text></g>`;
    s += `<path d="M1066 587V593H1126M1066 602V608H1126M1069 617V623H1121V617M1069 631V637H1121V631M1062 667H1127M1087 646h15v9h-15zM1097 650l5-4" fill="none" stroke="#111"/>`;
    return s;
  }

  template() {
    const a = [[940, '定义'], [962, '汇总计算'], [994, '云检查'], [1024, '平齐板顶'], [1055, '查找图元'], [1088, '查看钢筋量'], [1126, '批量选择', '#aaa'], [1159, '钢筋三维'], [1191, '锁定'], [1214, '解锁'], [1236, '批量删除未使用构件'], [1298, '三维'], [1326, '俯视'], [1352, '动态观察'], [1384, '局部三维', '#aaa']];
    const b = [[962, '删除'], [987, '复制'], [1009, '镜像'], [1034, '移动'], [1057, '旋转'], [1081, '延伸'], [1104, '修剪'], [1127, '打断'], [1150, '合并'], [1173, '分割'], [1197, '对齐'], [1223, '偏移'], [1246, '拉伸'], [1271, '设置夹点']];
    const c = [[1113, '属性'], [1136, '编辑钢筋'], [1167, '构件列表'], [1200, '拾取构件'], [1237, '两点'], [1260, '平行'], [1283, '点角'], [1309, '三点辅轴'], [1348, '删除辅轴'], [1380, '尺寸标注']];
    const d = [[958, '选择'], [988, '直线'], [1011, '点加长度'], [1043, '三点画弧'], [1106, '矩形'], [1132, '智能布置'], [1171, '修改梁段属性'], [1214, '原位标注'], [1252, '重提梁跨'], [1290, '梁跨数据复制'], [1337, '批量识别梁支座'], [1387, '应用到同名梁']];
    const e = [[958, '正交'], [981, '对象捕捉'], [1013, '动态输入'], [1050, '交点'], [1073, '垂点'], [1095, '中点'], [1118, '顶点'], [1140, '坐标']];
    const f = [[1070, '缩尺配筋'], [1104, '钢筋信息'], [1137, '钢筋图库'], [1169, '其他 ▾']];
    return `
      <style>
        :host { display: block; overflow: hidden; }
        svg { display: block; width: 100%; height: 100%; }
        text { font-family: "Noto Sans CJK SC", sans-serif; }
      </style>
      <svg viewBox="922 250 482 430" preserveAspectRatio="xMinYMin slice" role="img" aria-label="钢筋三维截图">
        <defs><linearGradient id="tt" x2="1"><stop stop-color="#c3d7ea"/><stop offset="1" stop-color="#8db8dc"/></linearGradient></defs>
        <rect x="922" y="250" width="482" height="430" fill="#fff"/>
        <rect x="922" y="250" width="482" height="8" fill="url(#tt)"/>
        <rect x="922" y="258" width="482" height="61" fill="#f3f5f8"/>
        <path d="M922 268.500H1404M943 281.500H1404M943 294.500H1404M943 306.500H1404" stroke="#dfe3e8"/>
        ${this.texts(256, [[922, 'E.GGJ2013 - [C:\\Users\\Administrator\\Desktop\\湾岭镇第二期水寨房.GGJ12]']])}
        ${this.texts(265, [[925, '构件(N)'], [948, '绘图(D)'], [970, '修改(M)'], [994, '钢筋量(Q)'], [1022, '视图(V)'], [1044, '工具(T)'], [1065, '云应用(Y)'], [1092, 'BIM应用(I)'], [1122, '在线服务(S)'], [1154, '帮助(H)'], [1176, '版本号(B)'], [1211, '新建变更 ▾']])}
        <rect x="1203" y="260" width="5" height="6" fill="#4cae4c"/>
        <g fill="#cfe3f7" stroke="#7da7d8" stroke-width=".7"><rect x="1149" y="270" width="35" height="9"/><rect x="1104" y="295" width="21" height="10"/><rect x="1126" y="295" width="35" height="10"/><rect x="948" y="308" width="27" height="10"/></g>
        ${this.ticks(277, a, '#3a74c0', '#8fb6e4')}${this.texts(277, a)}
        ${this.ticks(290, b, '#c4c4c4')}${this.texts(290, b, '#aaa')}
        ${this.texts(302, [[950, '首层'], [969, '▾'], [976, '梁'], [1000, '▾'], [1007, '梁'], [1032, '▾'], [1038, 'WKL1(1)'], [1064, '▾'], [1071, '分层1'], [1095, '▾']])}
        ${this.ticks(302, c, '#3a74c0', '#d8c49a')}${this.texts(302, c)}
        ${this.ticks(315, d, '#3a74c0', '#b9d2f0')}${this.texts(315, d)}
        <rect x="922" y="283" width="21" height="6" fill="#1a5ad0"/>
        <rect x="922" y="289" width="21" height="31" fill="#eef0f2"/>
        <path d="M922 300.500h21M922 311.500h21" stroke="#c5c9ce"/>
        <rect x="942" y="289" width="3" height="390" fill="#dcdee2"/>

        <rect x="945" y="319" width="459" height="229" fill="#000"/>
        <path d="M1050 335L1400 366M995 400L1000 548M1396 320L1404 548" stroke="#500" fill="none"/>
        <path d="M1023 319H1052L1061 548H1028z" fill="#007800"/><path d="M1023 319H1034L1040 548H1028z" fill="#005400"/>
        <rect x="946" y="320" width="77" height="80" fill="#5a6066" stroke="#8a8f94"/>
        <rect x="950" y="333" width="70" height="63" fill="#fff"/><rect x="957" y="344" width="63" height="5" fill="#2f8ef0"/>
        ${this.texts(329, [[949, '钢筋显示控制面板']], '#0a0a0a', 5)}
        ${this.texts(338, [[957, '支座负筋']], '#222', 5)}${this.texts(343, [[957, '下部钢筋']], '#222', 5)}${this.texts(354, [[957, '显示其它图元']], '#222', 5)}${this.texts(359, [[957, '显示详细公式']], '#222', 5)}
        <path d="M951 334h4v25h-4zM951 339h4M951 344h4M951 349h4M951 354h4" fill="none" stroke="#777" stroke-width=".7"/>
        <text x="1073" y="354" font-size="13" fill="#b81c18" style="font-family:'Liberation Serif','Noto Sans CJK SC',serif">构件属性是有架立筋（2C12），为啥汇总后查看钢筋三维却没有</text>
        <g fill="none" stroke="#c8c8c8">
          <path d="M1057 437L1404 468M1057 451L1404 487M1050 456L1404 492M1050 469L1404 500"/>
          <path d="M1037 441L1183 453M1037 449L1183 461M1310 472L1404 482" stroke="#9a9a9a"/>
          <path d="M1057 437V451L1050 469V456zM1037 441L1034 451M1037 449L1034 459" stroke="#8ae08a"/>
          <path d="M1310 464L1375 470" stroke="#d8d800"/>
        </g>
        <ellipse cx="1253" cy="457" rx="103" ry="44" fill="none" stroke="#e33c40" stroke-width="3"/>
        <path d="M1274 360L1252 438" stroke="#f04848" stroke-width="2"/><path d="M1250 448l-1-11l7 3z" fill="#f04848"/>
        <text x="1378" y="462" font-size="13" fill="#ddd">1797</text>
        <text x="1369" y="480" font-size="10" fill="#0c0">(4搭接)</text>
        <text x="1378" y="497" font-size="13" fill="#0c0">4700</text>
        <path d="M969 526L972 516" stroke="#1a80ff" stroke-width="2"/><path d="M969 526L988 528" stroke="#0f0" stroke-width="2"/><path d="M969 527V542" stroke="#f00" stroke-width="2"/>

        <rect x="945" y="548" width="459" height="27" fill="#f3f5f8"/>
        <g fill="#cfe3f7" stroke="#7da7d8" stroke-width=".7"><rect x="971" y="550" width="31" height="10"/><rect x="1003" y="550" width="35" height="10"/><rect x="1063" y="550" width="22" height="10"/><rect x="1086" y="550" width="22" height="10"/></g>
        ${this.ticks(557, e, '#3a74c0', '#b9d2f0')}${this.texts(557, e)}
        ${this.texts(557, [[1157, '不偏移'], [1177, '▾'], [1184, 'X=', '#999'], [1207, '0', '#999'], [1219, 'mm', '#999'], [1230, 'Y=', '#999'], [1252, '0', '#999'], [1264, 'mm', '#999'], [1286, '旋转'], [1306, '0.000', '#999']])}
        <g fill="none" stroke="#bbb" stroke-width=".8"><rect x="1193" y="550" width="25" height="9"/><rect x="1239" y="550" width="24" height="9"/><rect x="1277" y="552" width="5" height="5"/><rect x="1298" y="550" width="30" height="9"/></g>
        <g fill="#2b66d8"><path d="M953 566h1v6h-1zM958 566v6l-4-3zM967 566v6l-4-3zM974 566v6l4-3zM984 566v6l4-3zM988 566h1v6h-1zM998 566l3 3h-2v3h-2v-3h-2zM1008 572l3-3h-2v-3h-2v3h-2z"/></g>
        ${this.texts(571, [[1026, '插入', '#aaa'], [1048, '删除', '#aaa'], [1187, '关闭'], [1204, '单构件钢筋总重(kg)：83.907']])}
        ${this.ticks(571, f, '#3a74c0', '#d8dfea')}${this.texts(571, f)}
        ${this.table()}
      </svg>`;
  }
}

/* ---------- 浏览器 ---------- */

class BrowserApp extends BaseEl {
  paw() {
    return `<svg width="14" height="15" viewBox="0 0 14 15"><g fill="#2f6fe0"><ellipse cx="2" cy="7" rx="1.700" ry="2.200"/><ellipse cx="5" cy="3" rx="1.700" ry="2.400"/><ellipse cx="9" cy="3" rx="1.700" ry="2.400"/><ellipse cx="12" cy="7" rx="1.700" ry="2.200"/><path d="M7 7c2 0 3 2 4 3.500c2 3-1 4-4 3.500c-3 .5-6-.5-4-3.500c1-1.500 2-3.500 4-3.500z"/></g><path d="M5 10v3M7 10v3h2v-3" stroke="#fff" fill="none" stroke-width=".7"/></svg>`;
  }

  template() {
    const nav = ['首页', '新干线头条', '答疑解惑', '学习空间', '同城活动', '建筑课堂'];
    return `
      <style>
        :host { display: flex; flex-direction: column; min-width: 0; height: 100vh; background: #fff; overflow: hidden; white-space: nowrap; }
        .addr { display: flex; align-items: center; height: 26px; padding-bottom: 5px; border-bottom: 1px solid #dcdcdc; flex: none; }
        .addr svg, .marks svg { flex: none; }
        .line { width: 1px; height: 18px; background: #d8d8d8; flex: none; }
        .addr a { font: 12px/16px "Liberation Mono", monospace; color: #777; text-decoration: none; margin: 0 11px 0 3px; flex: none; }
        .addr a em { font-style: normal; color: #1a8a1a; }
        .addr a b { font-weight: normal; color: #000; }
        .q { font-size: 14px; margin: 0 6px 0 10px; color: #333; }
        .marks { display: flex; align-items: center; height: 29px; border-bottom: 1px solid #dcdcdc; margin-bottom: 6px; flex: none; color: #333; }
        .marks a { display: flex; align-items: center; gap: 3px; color: inherit; text-decoration: none; margin-right: 10px; flex: none; }
        .c { border: 3px solid transparent; border-top: 4px solid #666; border-bottom: 0; margin: 0 11px 0 7px; flex: none; }
        nav { display: flex; align-items: center; gap: 35px; height: 40px; padding-left: 52px; background: #0084ff; font-size: 15px; line-height: 20px; flex: none; }
        nav a { color: #fff; text-decoration: none; }
        .page { flex: 1; min-height: 0; display: flex; flex-direction: column; padding-left: 53px; background: #f0f2f4; overflow: hidden; }
        .crumb { display: flex; gap: 5px; height: 16px; margin: 22px 0 13px 3px; color: #888; }
        .crumb span:nth-child(2) { margin: 0 3px; }
        .crumb a { color: inherit; text-decoration: none; }
        article { flex: 1; min-height: 0; padding: 15px 0 0 19px; background: #fff; border: 1px solid #e4e6e9; border-width: 1px 0 0 1px; overflow: hidden; }
        .meta { display: flex; align-items: center; height: 24px; color: #888; }
        .meta .who { margin: 0 13px 0 9px; color: #667; }
        .meta time { min-width: 118px; }
        .meta i { font-style: normal; margin: 0 18px; }
        h1 { margin: 12px 0 15px; font-size: 16px; line-height: 24px; color: #222; }
        post-shot { aspect-ratio: 482 / 430; }
        p { margin: 32px 0 38px; font-size: 16px; line-height: 24px; color: #333; }
        article button { width: 88px; height: 32px; border: 0; border-top: 2px solid #1e73c8; background: #fff; padding: 0; display: block; }
        .scroll { height: 11px; background: #f1f1f1; flex: none; }
        .scroll div { width: 47%; height: 100%; background: #c1c1c1; }
      </style>
      <div class="addr">
        <svg width="43" height="22" viewBox="0 0 43 22"><path d="M1 8l3 3l-3 3" stroke="#bbb" fill="none"/><path d="M31 4a8.500 8.500 0 1 0 10 0M31 0v5h5" stroke="#444" fill="none" stroke-width="1.400"/></svg>
        <svg width="40" height="22" viewBox="0 0 40 22"><path d="M20 12l9.500-9.500l9.500 9.500M23 10v10h13v-10" stroke="#444" fill="none" stroke-width="1.400"/></svg>
        <span class="line" style="margin: 0 30px 0 11px"></span>
        <svg width="13" height="14" viewBox="0 0 13 14"><circle cx="6.500" cy="7" r="6" fill="#dceafd" stroke="#a8ccf5"/><circle cx="6.500" cy="7" r="4" fill="#8fb8f0"/></svg>
        <svg width="26" height="14" viewBox="0 0 26 14"><rect x="14" y="6" width="11" height="8" rx="1" fill="#4cc878"/><path d="M16 6v-2a3.500 3.500 0 0 1 7 0v2M15 9h9M15 11h9" stroke="#2fae5c" fill="none" stroke-width="1.300"/></svg>
        <a href="#"><em>https:</em>//www.<b>fwxgx.com</b>/q</a>
        <svg width="13" height="13" viewBox="0 0 13 13"><path d="M10 2L3 6.500L10 11" stroke="#777" fill="none" stroke-width="1.500"/><g fill="#777"><circle cx="10" cy="2" r="2"/><circle cx="3" cy="6.500" r="2.500"/><circle cx="10" cy="11" r="2"/></g></svg>
        <svg width="32" height="14" viewBox="0 0 32 14"><path d="M18 0l-8 8h4l-2 6l8-8h-4l3-6z" fill="#34c759"/></svg>
        <svg width="18" height="14" viewBox="0 0 18 14"><path d="M1 4l5 6l5-6" stroke="#777" fill="none" stroke-width="1.200"/></svg>
        <span class="line" style="margin-left: 5px"></span>
        <span class="q">屠龙在手君临</span>
        <svg width="15" height="15" viewBox="0 0 15 15"><circle cx="6" cy="6" r="5" fill="none" stroke="#888"/><path d="M10 10l4 4" stroke="#888"/></svg>
        <span class="line" style="margin-left: 11px"></span>
      </div>
      <div class="marks">
        <a href="#"><svg width="11" height="16" viewBox="5 0 11 16"><circle cx="8" cy="8" r="8" fill="#f4d81c"/><path d="M8 0a8 8 0 0 1 8 8h-8z" fill="#3fae3f"/><path d="M8 4v8M4 8h8" stroke="#123" stroke-width="2.500"/></svg>网址大全</a>
        <a href="#"><svg width="16" height="16" viewBox="0 0 16 16"><circle cx="7.500" cy="8" r="5.500" fill="none" stroke="#2fae4c" stroke-width="3"/><path d="M3 11a5.500 5.500 0 0 0 9 0" stroke="#f4c81c" fill="none" stroke-width="3"/><circle cx="14" cy="14" r="1.500" fill="#f4c81c"/></svg>360搜索</a>
        <a href="#" style="margin-right: 16px">${this.paw()}个人中心</a>
        <a href="#">${this.paw()}百度新闻</a>
        <span style="margin: 0 27px 0 10px; font-size: 16px; color: #777">»</span><span class="line"></span>
        <svg style="margin-left: 19px" width="18" height="18" viewBox="0 0 18 18"><circle cx="9" cy="9" r="8" fill="#d3e6fb" stroke="#6fa8ea" stroke-width="1.400"/><path d="M4 9h10" stroke="#4a8be0" stroke-width="2"/></svg>
        <svg style="margin-left: 16px" width="18" height="18" viewBox="0 0 18 18"><circle cx="9" cy="9" r="9" fill="#1ec85a"/><path d="M4 5h4v8h-4zM10 5h4v8h-4z" fill="#fff"/></svg>
        <svg style="margin-left: 16px" width="16" height="18" viewBox="0 0 16 18"><path d="M2 1l10 12M14 1l-10 12" stroke="#f06058" stroke-width="2.500"/><circle cx="3.500" cy="14" r="2.500" fill="none" stroke="#f06058" stroke-width="2"/><circle cx="12.500" cy="14" r="2.500" fill="none" stroke="#f06058" stroke-width="2"/></svg>
        <i class="c"></i>
        <svg width="18" height="18" viewBox="0 0 18 18"><rect width="14" height="14" rx="2" fill="#3cbf6c"/><path d="M3 11l4-8l3 8M4 8h5" stroke="#fff" fill="none" stroke-width="1.500"/><path d="M9 10h8v4h-8zM13 8v10" stroke="#3cbf6c" fill="none" stroke-width="2"/></svg>
        <i class="c"></i>
        <svg width="18" height="18" viewBox="0 0 18 18"><path d="M8 1l8 2v7q-1 5-8 8q-7-3-8-8v-7z" fill="#3cbf6c"/><path d="M5 5l3 4l3-4M5 9h6M5 11.500h6M8 9v5" stroke="#fff" fill="none"/><circle cx="14" cy="3" r="3" fill="#f0483c"/></svg>
        <i class="c"></i>
        <svg width="6" height="14"><rect width="12" height="14" rx="3" fill="#3cbf6c"/></svg>
      </div>
      <nav>${nav.map(t => `<a href="#" ${t === '答疑解惑' ? 'style="font-weight:bold"' : ''}>${t}</a>`).join('')}</nav>
      <div class="page">
        <div class="crumb"><span>当前位置</span><span>:</span><a href="#">服务新干线</a><span>&gt;</span><a href="#">答疑解惑</a><span>&gt;</span><span>详情</span></div>
        <article>
          <div class="meta">
            <svg width="18" height="18" viewBox="0 0 18 18"><rect width="18" height="18" fill="#9cc8f4"/><path d="M4 6a5 5 0 0 1 10 0zM5 7h8v2a4 4 0 0 1-8 0zM1 18q1-5 5-5l3 3l3-3q4 0 5 5z" fill="#fff"/><path d="M8 2v4M10 2v4" stroke="#9cc8f4" stroke-width=".7"/></svg>
            <span class="who">回忆</span><time>2019-07-25 09:38:20</time><i>|</i><span>海南省</span><span style="margin-left: 8px">土建</span><i>|</i><span>0查看</span><span style="margin-left: 8px">0回答</span>
          </div>
          <h1>架立筋</h1>
          <post-shot></post-shot>
          <p>请问，属性中是有输入架立筋的，可是汇总计算后，查看却没有显示</p>
          <button aria-label="回答"></button>
        </article>
      </div>
      <div class="scroll"><div></div></div>`;
  }
}

/* ---------- 红色批注箭头 ---------- */

class MarkLayer extends BaseEl {
  arrow([x1, y1, x2, y2]) {
    const len = Math.hypot(x2 - x1, y2 - y1);
    const ux = (x2 - x1) / len, uy = (y2 - y1) / len;
    const bx = x2 - ux * 18, by = y2 - uy * 18;
    return `<path d="M${x1} ${y1}L${bx} ${by}" stroke="#f50a0a" stroke-width="3" stroke-linecap="round"/>
      <path d="M${x2} ${y2}L${bx - uy * 6} ${by + ux * 6}L${bx + uy * 6} ${by - ux * 6}z" fill="#f50a0a"/>`;
  }

  template() {
    const arrows = [
      [396, 229, 140, 183],
      [1190, 377, 483, 312],
      [1249, 363, 1185, 377],
      [486, 314, 149, 716],
      [897, 456, 444, 715],
      [174, 743, 902, 739],
      [1249, 467, 1249, 362],
    ];
    return `
      <style>
        :host { display: block; position: fixed; inset: 0; pointer-events: none; }
        svg { display: block; width: 100%; height: 100%; }
      </style>
      <svg viewBox="0 0 1404 790" preserveAspectRatio="none">${arrows.map(a => this.arrow(a)).join('')}</svg>`;
  }
}

customElements.define('tool-btn', ToolBtn);
customElements.define('tool-sep', ToolSep);
customElements.define('tool-grip', ToolGrip);
customElements.define('tool-combo', ToolCombo);
customElements.define('tool-bar', ToolBar);
customElements.define('rebar-panel', RebarPanel);
customElements.define('model-view', ModelView);
customElements.define('rebar-table', RebarTable);
customElements.define('side-pane', SidePane);
customElements.define('post-shot', PostShot);
customElements.define('cad-app', CadApp);
customElements.define('browser-app', BrowserApp);
customElements.define('mark-layer', MarkLayer);
</script>
</body>
</html>
